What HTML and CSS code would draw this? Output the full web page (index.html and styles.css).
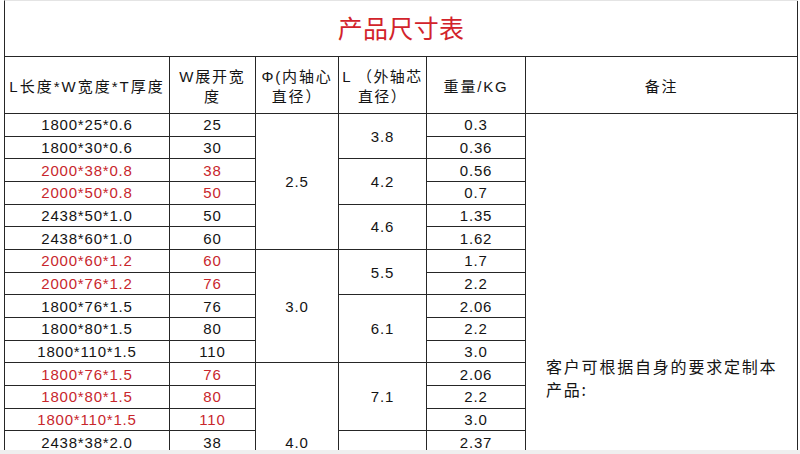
FILE: index.html
```html
<!DOCTYPE html>
<html lang="zh-CN">
<head>
<meta charset="utf-8">
<title>产品尺寸表</title>
<link rel="stylesheet" href="styles.css">
</head>
<body>
<div class="viewport">
  <div class="sheet">
    <div class="cell title">产品尺寸表</div>

    <div class="cell head c1">L长度*W宽度*T厚度</div>
    <div class="cell head">W展开宽<br>度</div>
    <div class="cell head">Φ(内轴心<br>直径）</div>
    <div class="cell head c4">L （外轴芯<br>直径）</div>
    <div class="cell head">重量/KG</div>
    <div class="cell head">备注</div>

    <!-- inner diameter (merged) -->
    <div class="cell merged in1">2.5</div>
    <div class="cell merged in2">3.0</div>
    <div class="cell merged in3">4.0</div>

    <!-- outer core (merged) -->
    <div class="cell merged out1">3.8</div>
    <div class="cell merged out2">4.2</div>
    <div class="cell merged out3">4.6</div>
    <div class="cell merged out4">5.5</div>
    <div class="cell merged out5">6.1</div>
    <div class="cell merged out6">7.1</div>
    <div class="cell merged out7"></div>

    <!-- remark -->
    <div class="cell remark">客户可根据自身的要求定制本<br>产品:</div>

    <!-- rows -->
    <div class="cell d r1 ca">1800*25*0.6</div><div class="cell d r1 cb">25</div><div class="cell d r1 ce">0.3</div>
    <div class="cell d r2 ca">1800*30*0.6</div><div class="cell d r2 cb">30</div><div class="cell d r2 ce">0.36</div>
    <div class="cell d r3 ca red">2000*38*0.8</div><div class="cell d r3 cb red">38</div><div class="cell d r3 ce">0.56</div>
    <div class="cell d r4 ca red">2000*50*0.8</div><div class="cell d r4 cb red">50</div><div class="cell d r4 ce">0.7</div>
    <div class="cell d r5 ca">2438*50*1.0</div><div class="cell d r5 cb">50</div><div class="cell d r5 ce">1.35</div>
    <div class="cell d r6 ca">2438*60*1.0</div><div class="cell d r6 cb">60</div><div class="cell d r6 ce">1.62</div>
    <div class="cell d r7 ca red">2000*60*1.2</div><div class="cell d r7 cb red">60</div><div class="cell d r7 ce">1.7</div>
    <div class="cell d r8 ca red">2000*76*1.2</div><div class="cell d r8 cb red">76</div><div class="cell d r8 ce">2.2</div>
    <div class="cell d r9 ca">1800*76*1.5</div><div class="cell d r9 cb">76</div><div class="cell d r9 ce">2.06</div>
    <div class="cell d r10 ca">1800*80*1.5</div><div class="cell d r10 cb">80</div><div class="cell d r10 ce">2.2</div>
    <div class="cell d r11 ca">1800*110*1.5</div><div class="cell d r11 cb">110</div><div class="cell d r11 ce">3.0</div>
    <div class="cell d r12 ca red">1800*76*1.5</div><div class="cell d r12 cb red">76</div><div class="cell d r12 ce">2.06</div>
    <div class="cell d r13 ca red">1800*80*1.5</div><div class="cell d r13 cb red">80</div><div class="cell d r13 ce">2.2</div>
    <div class="cell d r14 ca red">1800*110*1.5</div><div class="cell d r14 cb red">110</div><div class="cell d r14 ce">3.0</div>
    <div class="cell d r15 ca">2438*38*2.0</div><div class="cell d r15 cb">38</div><div class="cell d r15 ce">2.37</div>
  </div>
</div>
</body>
</html>
```

FILE: styles.css
```css
html, body {
  margin: 0;
  padding: 0;
}
body {
  background: #efefef;
  width: 800px;
  height: 454px;
  overflow: hidden;
  font-family: "Liberation Sans", "Noto Sans CJK SC", sans-serif;
  color: #141414;
}
.viewport {
  background: #ffffff;
  height: 450px;
  overflow: hidden;
  padding: 0 4px;
}
.sheet {
  display: grid;
  width: 793px;
  grid-template-columns: 165px 86px 83px 88px 99px 272px;
  grid-template-rows: 56px 57px repeat(15, 22.67px) 68px 122px;
  border-left: 1px solid #262626;
  border-top: 1px solid #e4e4e4;
}
.cell {
  border-right: 1px solid #262626;
  border-bottom: 1px solid #262626;
  display: flex;
  align-items: center;
  justify-content: center;
  text-align: center;
  white-space: nowrap;
}
.title {
  grid-column: 1 / 7;
  grid-row: 1;
  font-family: "Noto Sans CJK SC", sans-serif;
  font-size: 25px;
  color: #d2232b;
  letter-spacing: 0.3px;
  padding-bottom: 3px;
}
.head {
  grid-row: 2;
  font-family: "Liberation Sans", "Noto Sans CJK SC", sans-serif;
  font-size: 15px;
  line-height: 20px;
  letter-spacing: 1.8px;
  padding-top: 4px;
}
.head.c1 {
  letter-spacing: 2px;
}
.head.c4 {
  letter-spacing: 1.4px;
}
.d {
  font-size: 15px;
  letter-spacing: 0.8px;
}
.red {
  color: #c8262c;
}
.ca { grid-column: 1; }
.cb { grid-column: 2; }
.ce { grid-column: 5; }
.r1 { grid-row: 3; }
.r2 { grid-row: 4; }
.r3 { grid-row: 5; }
.r4 { grid-row: 6; }
.r5 { grid-row: 7; }
.r6 { grid-row: 8; }
.r7 { grid-row: 9; }
.r8 { grid-row: 10; }
.r9 { grid-row: 11; }
.r10 { grid-row: 12; }
.r11 { grid-row: 13; }
.r12 { grid-row: 14; }
.r13 { grid-row: 15; }
.r14 { grid-row: 16; }
.r15 { grid-row: 17; }

.merged {
  font-size: 15px;
  letter-spacing: 0.8px;
}
.in1 { grid-column: 3; grid-row: 3 / 9; }
.in2 { grid-column: 3; grid-row: 9 / 14; }
.in3 { grid-column: 3; grid-row: 14 / 19; }
.out1 { grid-column: 4; grid-row: 3 / 5; }
.out2 { grid-column: 4; grid-row: 5 / 7; }
.out3 { grid-column: 4; grid-row: 7 / 9; }
.out4 { grid-column: 4; grid-row: 9 / 11; }
.out5 { grid-column: 4; grid-row: 11 / 14; }
.out6 { grid-column: 4; grid-row: 14 / 17; }
.out7 { grid-column: 4; grid-row: 17 / 19; }

.remark {
  grid-column: 6;
  grid-row: 3 / 20;
  justify-content: flex-start;
  text-align: left;
  padding-left: 20px;
  font-family: "Noto Sans CJK SC", sans-serif;
  font-size: 16px;
  line-height: 23px;
  letter-spacing: 1.8px;
}
```
